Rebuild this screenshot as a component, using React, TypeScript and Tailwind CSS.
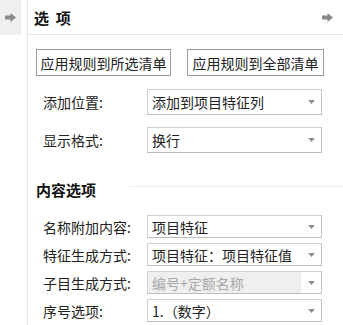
import React from "react";

const font = { fontFamily: '"Noto Sans CJK SC", "Noto Sans", sans-serif' };

function Arrow() {
  return (
    <svg width="11" height="9" viewBox="0 0 11 9">
      <rect x="0" y="2.5" width="6" height="4" fill="#8a8a8a" />
      <polygon points="5.5,0 11,4.5 5.5,9" fill="#8a8a8a" />
    </svg>
  );
}

function Caret() {
  return (
    <svg width="7" height="4" viewBox="0 0 7 4">
      <polygon points="0,0 7,0 3.5,4" fill="#8e8e8e" />
    </svg>
  );
}

function Select({ value, disabled, h = "h-[26px]" }: { value: string; disabled?: boolean; h?: string }) {
  return (
    <div
      className={`flex ${h} w-[175px] items-stretch border border-[#cfcfcf] border-b-[#bdbdbd] border-r-[#c4c4c4] bg-white`}
    >
      <div
        className={`flex flex-1 items-center pl-[4px] text-[14px] leading-none ${
          disabled ? "bg-[#efefef] text-[#a8a8a8]" : "text-[#222]"
        }`}
      >
        {value}
      </div>
      <div className="flex w-[20px] items-center justify-center">
        <Caret />
      </div>
    </div>
  );
}

function Row({ label, value, disabled, h }: { label: string; value: string; disabled?: boolean; h?: string }) {
  return (
    <div className="flex items-center">
      <div className="w-[111px] pl-[7px] text-[14px] leading-none text-[#222]">{label}</div>
      <Select value={value} disabled={disabled} h={h} />
    </div>
  );
}

export default function App() {
  return (
    <div className="flex h-[325px] w-[343px] overflow-hidden bg-white" style={font}>
      <div className="w-[21px] shrink-0">
        <div className="flex h-[35px] items-center justify-center bg-[#efefef]">
          <Arrow />
        </div>
      </div>
      <div className="ml-[6px] flex flex-1 flex-col border-l border-[#e8e8e8]">
        <div className="flex h-[35px] shrink-0 items-center justify-between border-b border-[#e6e6e6] pl-[6px] pr-[10px]">
          <span className="text-[15px] font-bold leading-none text-[#111]">选&nbsp;&nbsp;项</span>
          <Arrow />
        </div>
        <div className="flex flex-col pl-[8px]">
          <div className="mt-[14px] flex gap-[16px]">
            <button className="flex h-[27px] w-[135px] items-center justify-center border border-[#9c9c9c] bg-white text-[14px] leading-none text-[#222]">
              应用规则到所选清单
            </button>
            <button className="flex h-[27px] w-[137px] items-center justify-center border border-[#9c9c9c] bg-white text-[14px] leading-none text-[#222]">
              应用规则到全部清单
            </button>
          </div>
          <div className="mt-[13px] flex flex-col gap-[12px]">
            <Row label="添加位置:" value="添加到项目特征列" />
            <Row label="显示格式:" value="换行" />
          </div>
          <div className="mt-[29px] flex items-center">
            <span className="text-[15px] font-bold leading-none text-[#111]">内容选项</span>
            <div className="ml-[33px] -mt-[6px] h-px flex-1 bg-[#ececec]" />
          </div>
          <div className="mt-[18px] flex flex-col gap-[5px]">
            <Row label="名称附加内容:" value="项目特征" h="h-[23px]" />
            <Row label="特征生成方式:" value="项目特征：项目特征值" h="h-[23px]" />
            <Row label="子目生成方式:" value="编号+定额名称" disabled h="h-[23px]" />
            <Row label="序号选项:" value="1.（数字）" h="h-[23px]" />
          </div>
        </div>
      </div>
    </div>
  );
}
